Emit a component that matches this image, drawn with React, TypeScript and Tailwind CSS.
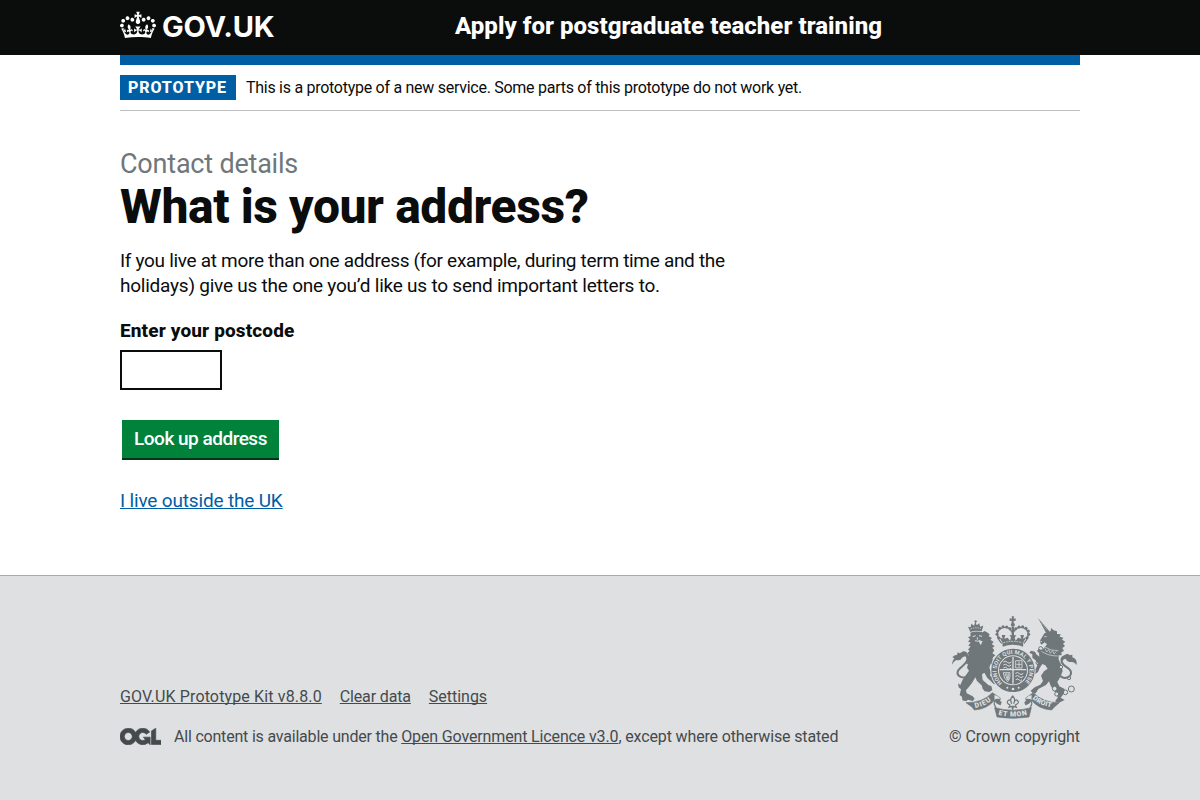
import type { ReactNode } from "react";

function Crown() {
  return (
    <svg viewBox="0 0 132 97" className="h-[30px] w-9 fill-white" aria-hidden="true">
      <path fillRule="evenodd" d="M25 30.2c3.5 1.5 7.7-.2 9.1-3.7 1.5-3.6-.2-7.8-3.9-9.2-3.6-1.4-7.6.3-9.1 3.9-1.4 3.5.3 7.5 3.9 9zM9 39.5c3.6 1.5 7.8-.2 9.2-3.7 1.5-3.6-.2-7.8-3.9-9.1-3.6-1.5-7.6.2-9.1 3.8-1.4 3.5.3 7.5 3.8 9zM4.4 57.2c3.5 1.5 7.7-.2 9.1-3.8 1.5-3.6-.2-7.7-3.9-9.1-3.5-1.5-7.6.3-9.1 3.8-1.4 3.5.3 7.6 3.9 9.1zm38.3-21.4c3.5 1.5 7.7-.2 9.1-3.8 1.5-3.6-.2-7.7-3.9-9.1-3.6-1.5-7.6.3-9.1 3.8-1.3 3.6.4 7.7 3.9 9.1zm64.4-5.6c-3.6 1.5-7.8-.2-9.1-3.7-1.5-3.6.2-7.8 3.8-9.2 3.6-1.4 7.7.3 9.2 3.9 1.3 3.5-.4 7.5-3.9 9zm15.9 9.3c-3.6 1.5-7.7-.2-9.1-3.7-1.5-3.6.2-7.8 3.7-9.1 3.6-1.5 7.7.2 9.2 3.8 1.5 3.5-.3 7.5-3.8 9zm4.7 17.7c-3.6 1.5-7.8-.2-9.2-3.8-1.5-3.6.2-7.7 3.9-9.1 3.6-1.5 7.7.3 9.2 3.8 1.3 3.5-.4 7.6-3.9 9.1zM89.3 35.8c-3.6 1.5-7.8-.2-9.2-3.8-1.4-3.6.2-7.7 3.9-9.1 3.6-1.5 7.7.3 9.2 3.8 1.4 3.6-.3 7.7-3.9 9.1zM69.7 17.7l8.9 4.7V9.3l-8.9 2.8c-.2-.3-.5-.6-.9-.9L72.4 0H59.6l3.5 11.2c-.3.3-.6.5-.9.9l-8.8-2.8v13.1l8.8-4.7c.3.3.6.7.9.9l-5 15.4v.1c-.2.8-.4 1.6-.4 2.4 0 4.1 3.1 7.5 7 8.1h.2c.3 0 .7.1 1 .1.4 0 .7 0 1-.1h.2c4-.6 7.1-4.1 7.1-8.1 0-.8-.1-1.7-.4-2.4V34l-5.1-15.4c.4-.2.7-.6 1-.9zM66 92.8c16.9 0 32.8 1.1 47.1 3.2 4-16.9 8.9-26.7 14-33.5l-9.6-3.4c1 4.9 1.1 7.2 0 10.2-1.5-1.4-3-4.3-4.2-8.7L108.6 76c2.8-2 5-3.2 7.5-3.3-4.4 9.4-10 11.9-13.6 11.2-4.3-.8-6.3-4.6-5.6-7.9 1-4.7 5.7-5.9 8-.5 4.3-8.7-3-11.4-7.6-8.8 7.1-7.2 7.9-13.5 2.1-21.1-8 6.1-8.1 12.3-4.5 20.8-4.7-5.4-12.1-2.5-9.5 6.2 3.4-5.2 7.9-2 7.2 3.1-.6 4.3-6.4 7.8-13.5 7.2-10.3-.9-10.9-8-11.2-13.8 2.5-.5 7.1 1.8 11 7.3L80.2 60c-4.1 4.4-8 5.3-12.3 5.4 1.4-4.4 8-11.6 8-11.6H55.5s6.4 7.2 7.9 11.6c-4.2-.1-8-1-12.3-5.4l1.4 16.4c3.9-5.5 8.5-7.7 10.9-7.3-.3 5.8-.9 12.8-11.1 13.8-7.2.6-12.9-2.9-13.5-7.2-.7-5 3.8-8.3 7.1-3.1 2.7-8.7-4.6-11.6-9.4-6.2 3.7-8.5 3.6-14.7-4.6-20.8-5.8 7.6-5 13.9 2.2 21.1-4.7-2.6-11.9.1-7.7 8.8 2.3-5.5 7.1-4.2 8.1.5.7 3.3-1.3 7.1-5.7 7.9-3.5.7-9-1.8-13.5-11.2 2.5.1 4.7 1.3 7.5 3.3l-4.7-15.4c-1.2 4.4-2.7 7.2-4.3 8.7-1.1-3-.9-5.3 0-10.2l-9.5 3.4c5 6.9 9.9 16.7 14 33.5 14.8-2.1 30.8-3.2 47.7-3.2z" />
    </svg>
  );
}

function OglLogo() {
  return (
    <svg viewBox="0 0 483.2 195.7" className="mb-[2px] h-[17px] w-[41px] fill-[#454a4d] stroke-[#454a4d] stroke-[8]" aria-hidden="true">
      <path d="M421.5 142.8V.1l-50.7 32.3v161.1h112.4v-50.7zm-122.3-9.6A47.12 47.12 0 0 1 221 97.8c0-26 21.1-47.1 47.1-47.1 16.7 0 31.4 8.7 39.7 21.8l42.7-27.2A97.63 97.63 0 0 0 268.1 0c-36.5 0-68.3 20.1-85.1 49.7A98 98 0 0 0 97.8 0C43.9 0 0 43.9 0 97.8s43.9 97.8 97.8 97.8c36.5 0 68.3-20.1 85.1-49.7a97.76 97.76 0 0 0 149.6 25.4l19.4 22.2h3v-87.8h-80l24.3 27.5zM97.8 145c-26 0-47.1-21.1-47.1-47.1s21.1-47.1 47.1-47.1 47.1 21.1 47.1 47.1S123.8 145 97.8 145" />
    </svg>
  );
}

const beads = [
  [176, 98], [171, 88], [172, 78], [179, 70], [189, 65], [200, 66], [210, 71],
  [261, 98], [266, 88], [265, 78], [258, 70], [248, 65], [237, 66], [227, 71],
];

function RoyalArms() {
  const ink = "#6f777b";
  const paper = "#dee0e2";
  return (
    <svg viewBox="30 30 390 315" className="h-[105px] w-[130px]" fill={ink} aria-hidden="true">
      {/* lion */}
      <path d="M91 81 L84 65 L92 67 L94 56 L102 62 L106 50 L110 61 L118 55 L120 65 L130 62 L125 79 Q107 74 91 81Z" />
      <path d="M107 46v8M103 49h8" stroke={ink} strokeWidth="3" />
      <path d="M92 72Q107 65 123 71" stroke={paper} strokeWidth="2.5" fill="none" strokeDasharray="4 3" />
      <path d="M91 83 Q108 76 127 82 L134 78 L143 83 L149 88 L146 94 L156 99 L151 104 L161 111 L155 117 L164 124 L157 128 L163 136 L157 145 L166 151 L158 158 L158 173 L166 179 L166 190 L158 185 L152 176 L148 188 L153 201 L150 212 L163 215 L176 211 L181 217 L178 225 L163 226 L176 232 L174 240 L160 236 L149 225 L142 219 L133 203 L126 208 L128 225 L146 241 L154 243 L157 255 L148 261 L134 259 L127 250 L126 242 L111 228 L106 217 L96 234 L86 247 L78 256 L80 265 L98 274 L104 281 L98 288 L84 284 L78 289 L67 286 L66 275 L59 270 L63 253 L56 247 L54 235 L61 240 L68 224 L78 210 L87 197 L81 188 L84 176 L78 178 L83 165 L79 158 L86 150 L82 145 L89 137 L84 134 L92 124 L85 123 L92 112 L84 111 L90 103 L84 96 L92 94Z" />
      <path d="M98 95l9-3M117 92l9 2M112 97v7M105 107q8 4 17-1" stroke={paper} strokeWidth="3" fill="none" />
      <path d="M116 109l12-1-6 13Z" fill={paper} />
      <path d="M83 213 C71 223 50 214 53 200 C56 188 79 180 82 163 C84 152 75 147 69 151" fill="none" stroke={ink} strokeWidth="6" />
      <path d="M69 139 Q84 139 85 155 Q76 151 66 158 Q62 168 50 165 Q44 166 36 179 Q36 168 43 160 L37 157 Q44 149 51 150 L53 142 Q60 148 69 139Z" />

      {/* unicorn */}
      <path d="M294 39 L330 81 L320 87Z" />
      <path d="M303 54l6 5M309 62l6 5M315 69l6 5" stroke={paper} strokeWidth="1" />
      <path d="M314 84 L326 82 L332 78 L333 69 L341 76 L351 79 L351 87 L362 88 L359 95 L370 98 L366 104 L376 110 L369 116 L375 123 L367 129 L372 138 L364 142 L365 151 L356 151 L356 164 L363 178 L368 198 L361 216 L352 231 L358 244 L374 252 L371 266 L362 278 L374 285 L355 294 L345 289 L353 278 L350 263 L341 257 L332 242 L327 229 L318 240 L305 247 L295 252 L287 265 L278 264 L272 257 L284 247 L301 239 L309 228 L303 212 L312 199 L323 191 L316 181 L307 177 L299 189 L294 201 L280 211 L275 202 L288 190 L294 177 L289 168 L277 158 L277 148 L268 143 L273 137 L285 140 L289 148 L298 155 L297 144 L291 138 L296 132 L306 135 L312 129 L321 118 L314 112 L305 119 L300 113 L301 105 L307 95Z" />
      <path d="M313 95h7M301 111l5-2" stroke={paper} strokeWidth="2.5" fill="none" />
      <path d="M314 126Q332 138 355 137M304 139Q325 153 353 153" fill="none" stroke={paper} strokeWidth="2" />
      <path d="M315 131l5 10 6-7 5 11 7-8 4 10 7-8" stroke={paper} strokeWidth="2" fill="none" />
      <path d="M361 213 C375 226 394 215 393 202 C392 187 369 186 365 170 C362 157 372 153 378 155" fill="none" stroke={ink} strokeWidth="6" />
      <path d="M374 150 Q384 143 389 151 L397 149 L397 157 Q412 161 410 180 Q402 169 394 171 Q381 171 377 161 Q367 162 366 174 Q359 158 374 150Z" />
      <g fill="none" stroke={ink} strokeWidth="3">
        <circle cx="394" cy="252" r="9" />
        <circle cx="376" cy="262" r="7" />
        <circle cx="344" cy="251" r="7" fill={paper} />
        <circle cx="350" cy="267" r="6" fill={paper} />
        <circle cx="294" cy="173" r="6" />
        <circle cx="302" cy="131" r="6" />
        <circle cx="363" cy="186" r="5" fill={paper} />
        <circle cx="387" cy="219" r="5" />
      </g>

      {/* royal crown */}
      <path d="M215 34h7l-1 7 6-1v8l-6-1v7h-6v-7l-6 1v-8l7 1Z" />
      <circle cx="218.500" cy="59" r="6" />
      <path d="M215 65h7v42h-7Z" />
      <g>
        {beads.map(([x, y]) => (
          <circle key={`${x}-${y}`} cx={x} cy={y} r="4.500" />
        ))}
      </g>
      <path d="M185 115 Q170 99 173 81 Q183 62 207 69 L218 83 L231 69 Q254 62 264 81 Q267 99 252 115" fill="none" stroke={ink} strokeWidth="4" />
      <path d="M187 112 L178 97 L188 101 L185 90 L196 90 L193 101 L203 98 L210 107 L213 97 L208 91 L229 91 L224 98 L227 107 L234 98 L244 101 L241 90 L252 90 L249 101 L259 97 L250 112 L249 125 Q218 114 188 125Z" />
      <path d="M190 113Q218 105 247 113" stroke={paper} strokeWidth="2.500" fill="none" strokeDasharray="5 3" />

      {/* garter and shield */}
      <circle cx="219" cy="196" r="68" fill={paper} />
      <circle cx="219" cy="196" r="55" fill="none" stroke={ink} strokeWidth="20" />
      <circle cx="219" cy="196" r="42" />
      <defs>
        <path id="garter" d="M187 234 A49.500 49.500 0 1 1 251 234" />
        <path id="scroll-left" d="M106 309 Q137 303 158 283" />
        <path id="scroll-centre" d="M175 329 Q218 340 264 329" />
        <path id="scroll-right" d="M277 281 Q299 302 337 308" />
      </defs>
      <g fill={paper} fontFamily="Roboto, sans-serif" fontWeight="700">
        <text fontSize="17"><textPath href="#garter" textLength="236">HONI SOIT QUI MAL Y PENSE</textPath></text>
      </g>
      <path d="M179 194h80M219 156v80" stroke={paper} strokeWidth="4" />
      <path d="M190 171q8-5 12 1t12-1M190 180q8-5 12 1t12-1M190 189q8-5 12 1t12-1M226 205q8-5 12 1t12-1M226 214q8-5 12 1t12-1M227 224q8-5 11 1t8-1" stroke={paper} strokeWidth="3" fill="none" />
      <path d="M227 167h19v22h-19ZM237 169v18M229 178h16M190 203h20q2 19-7 27-12-9-13-27ZM195 205l7 20M200 205l4 20M205 205v19" stroke={paper} strokeWidth="2.500" fill="none" />
      <g fill={paper}>
        <circle cx="202" cy="248" r="3" />
        <circle cx="219" cy="252" r="4" />
        <circle cx="236" cy="248" r="3" />
      </g>

      {/* scroll */}
      <g stroke={ink} strokeWidth="2">
        <path d="M78 293 Q128 294 157 263 L181 279 Q175 286 184 292 L181 300 Q166 295 164 285 Q141 313 103 315 L96 306Z" />
        <path d="M358 293 Q310 294 280 263 L257 279 Q263 286 254 292 L257 300 Q272 295 274 285 Q296 313 335 315 L343 306Z" />
        <path d="M164 308 Q218 323 274 308 L267 336 Q218 344 171 336Z" />
      </g>
      <path d="M163 271Q176 272 181 283Q168 279 164 289Z M275 271Q262 272 257 283Q270 279 274 289Z" fill={paper} />
      <path d="M181 284Q160 279 163 298L169 312M257 284Q278 279 275 298L269 312" fill="none" stroke={ink} strokeWidth="3.500" />
      <g fill={paper} fontFamily="Roboto, sans-serif" fontWeight="900">
        <text fontSize="21"><textPath href="#scroll-left" textLength="53">DIEU</textPath></text>
        <text fontSize="21"><textPath href="#scroll-centre" textLength="87">ET MON</textPath></text>
        <text fontSize="21"><textPath href="#scroll-right" textLength="63">DROIT</textPath></text>
      </g>
      <path d="M218 273 Q228 283 221 296 Q225 280 233 287 Q239 295 226 300 L229 307 L220 304 L218 314 L216 304 L207 307 L210 300 Q198 295 204 287 Q212 280 215 296 Q208 283 218 273Z" fill={paper} stroke={ink} strokeWidth="3.500" />
    </svg>
  );
}

function FooterLink({ children, className = "" }: { children: ReactNode; className?: string }) {
  return (
    <a href="#" className={`underline decoration-1 underline-offset-[1px] [text-decoration-skip-ink:none] ${className}`}>
      {children}
    </a>
  );
}

export default function App() {
  return (
    <div className="flex min-h-screen flex-col bg-white font-[Roboto,'Liberation_Sans',sans-serif] text-[#0b0c0c]">
      <header className="h-[55px] bg-[#0b0c0c] text-white">
        <div className="mx-auto flex h-full w-[960px] items-start">
          <a href="#" className="flex w-[335px] gap-[6px] pt-[10px]">
            <Crown />
            <span className="font-[Inter,sans-serif] text-[29px] leading-[33px] font-bold tracking-[-0.2px]">GOV.UK</span>
          </a>
          <a href="#" className="pt-[11px] text-2xl leading-[30px] font-extrabold tracking-[0.04px]">
            Apply for postgraduate teacher training
          </a>
        </div>
      </header>

      <div className="mx-auto w-[960px]">
        <div className="h-[10px] bg-[#005ea5]" />
        <div className="flex h-[46px] items-center border-b border-[#bfc1c3] text-base">
          <strong className="mr-[10px] h-[25px] w-[116px] bg-[#005ea5] pl-2 leading-[25px] font-extrabold tracking-[0.9px] text-white">
            PROTOTYPE
          </strong>
          <span className="tracking-[-0.275px]">
            This is a prototype of a new service. Some parts of this prototype do not work yet.
          </span>
        </div>
      </div>

      <main className="mx-auto w-[960px] flex-1 pt-[38px] text-[19px] leading-[25px]">
        <h1>
          <span className="block text-[27px] leading-[30px] tracking-[-0.21px] text-[#6f777b]">Contact details</span>
          <span className="block pt-[3px] text-[48px] leading-[50px] font-extrabold tracking-[-0.4px]">What is your address?</span>
        </h1>
        <p className="mt-4 tracking-[-0.31px]">
          If you live at more than one address (for example, during term time and the
          <br />
          <span className="tracking-[-0.23px]">holidays) give us the one you’d like us to send important letters to.</span>
        </p>
        <label htmlFor="postcode" className="mt-5 block font-extrabold tracking-[0.13px]">
          Enter your postcode
        </label>
        <input id="postcode" className="mt-[7px] block h-10 w-[102px] border-2 border-[#0b0c0c] px-1" />
        <button className="mt-[30px] ml-[2px] block h-10 w-[157px] border-b-2 border-[#003618] bg-[#00823b] text-center text-[19px] leading-[38px] font-medium tracking-[-0.5px] text-white">
          Look up address
        </button>
        <a href="#" className="mt-7 inline-block tracking-[-0.17px] text-[#005ea5] underline decoration-1 underline-offset-[1px] [text-decoration-skip-ink:none]">
          I live outside the UK
        </a>
      </main>

      <footer className="h-[225px] border-t border-[#a1acb2] bg-[#dee0e2] text-base leading-5 text-[#454a4d]">
        <div className="mx-auto flex w-[960px] justify-between pt-[39px]">
          <div className="pt-[72px]">
            <nav className="flex gap-[18px]">
              <FooterLink className="tracking-[0.14px]">GOV.UK Prototype Kit v8.8.0</FooterLink>
              <FooterLink className="tracking-[-0.15px]">Clear data</FooterLink>
              <FooterLink className="tracking-[-0.02px]">Settings</FooterLink>
            </nav>
            <div className="mt-5 flex items-center">
              <OglLogo />
              <p className="ml-[13px] tracking-[-0.14px]">
                <span className="tracking-[-0.2px]">All content is available under the </span>
                <FooterLink>Open Government Licence v3.0</FooterLink>, except where otherwise stated
              </p>
            </div>
          </div>
          <div className="flex flex-col items-end">
            <RoyalArms />
            <p className="mt-[7px] tracking-[-0.09px]">© Crown copyright</p>
          </div>
        </div>
      </footer>
    </div>
  );
}
